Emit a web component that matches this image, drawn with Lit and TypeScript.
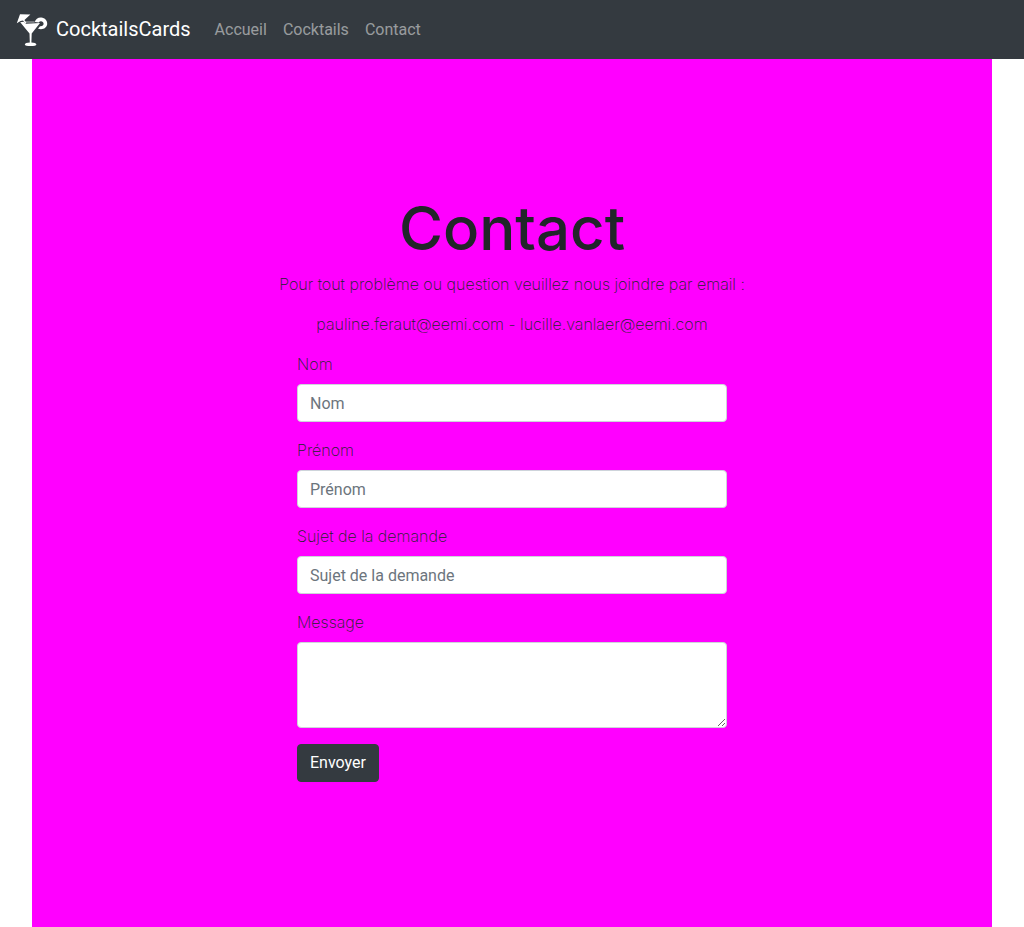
import { LitElement, html, css } from "lit";
import { customElement } from "lit/decorators.js";

@customElement("app-navbar")
export class AppNavbar extends LitElement {
  static styles = css`
    :host {
      display: block;
    }
    .bar {
      display: flex;
      align-items: center;
      gap: 16px;
      box-sizing: border-box;
      min-height: 59px;
      padding: 8px 16px;
      background: #343a40;
    }
    .brand {
      display: flex;
      align-items: center;
      gap: 8px;
      color: #fff;
      font-size: 20px;
      line-height: 30px;
      text-decoration: none;
    }
    .name {
      padding-bottom: 2px;
    }
    .logo {
      display: block;
      width: 32px;
      height: 34px;
    }
    .links {
      display: flex;
      margin: 0;
      padding: 0;
      list-style: none;
    }
    .link {
      display: block;
      padding: 8px;
      color: rgba(255, 255, 255, 0.5);
      font-size: 16px;
      line-height: 24px;
      text-decoration: none;
    }
  `;

  render() {
    return html`
      <nav class="bar">
        <a class="brand" href="#">
          <svg class="logo" viewBox="0 0 32 34" fill="#fff" aria-hidden="true">
            <path d="M4 1.3 14.4 1.5 8.2 7.2 4.6 8 .8 10.2Z" />
            <path d="M6 6 7.2 5.4 10.4 9.8 9.2 10.4Z" />
            <path d="M4.2 9.3 7.6 8.8 10 10.8 15 10.5 24 10 15.7 20.6 15.4 29.6C18.2 29.8 20.4 30.4 20.4 31.4S18 33 14.6 33 8.8 32.4 8.8 31.4 11 29.8 13.8 29.6L13.5 20.6Z" />
            <path d="M9 8.6H18.6V9.6H9.4Z" opacity=".65" />
            <path d="M18.8 9C19.5 6.4 22 4.4 25.2 4.6 29 4.9 31.6 7.9 31.2 11.2 30.6 14.9 27 17.2 22 15.7L24 13.2C26.2 13.5 27.6 12.3 27.6 10.7 27.6 9.4 26.4 8.3 25 8.3 24 8.3 23.3 8.7 22.8 9.4Z" />
          </svg>
          <span class="name">CocktailsCards</span>
        </a>
        <ul class="links">
          <li><a class="link" href="#accueil">Accueil</a></li>
          <li><a class="link" href="#cocktails">Cocktails</a></li>
          <li><a class="link" href="#contact">Contact</a></li>
        </ul>
      </nav>
    `;
  }
}

@customElement("contact-form")
export class ContactForm extends LitElement {
  static styles = css`
    :host {
      display: block;
      width: 100%;
      max-width: 430px;
    }
    .form {
      display: flex;
      flex-direction: column;
      align-items: flex-start;
      gap: 16px;
      margin-bottom: 16px;
    }
    .group {
      display: flex;
      flex-direction: column;
      gap: 8px;
      width: 100%;
    }
    .label {
      font-family: Inter, Roboto, sans-serif;
      font-weight: 200;
    }
    .control {
      box-sizing: border-box;
      width: 100%;
      height: 38px;
      margin: 0;
      padding: 6px 12px;
      border: 1px solid #ced4da;
      border-radius: 4px;
      background: #fff;
      color: #495057;
      font: inherit;
    }
    .control::placeholder {
      color: #6c757d;
      opacity: 1;
    }
    .area {
      display: block;
      height: 86px;
      resize: vertical;
    }
    .submit {
      padding: 6px 12px;
      border: 1px solid #343a40;
      border-radius: 4px;
      background: #343a40;
      color: #fff;
      font: inherit;
      cursor: pointer;
    }
  `;

  private fields = [
    { id: "nom", label: "Nom" },
    { id: "prenom", label: "Prénom" },
    { id: "sujet", label: "Sujet de la demande" },
  ];

  render() {
    return html`
      <form class="form">
        ${this.fields.map(
          (f) => html`
            <div class="group">
              <label class="label" for=${f.id}>${f.label}</label>
              <input class="control" type="text" id=${f.id} name=${f.id} placeholder=${f.label} />
            </div>
          `
        )}
        <div class="group">
          <label class="label" for="message">Message</label>
          <textarea class="control area" id="message" name="message"></textarea>
        </div>
        <button class="submit" type="submit">Envoyer</button>
      </form>
    `;
  }
}

@customElement("app-root")
export class AppRoot extends LitElement {
  static styles = css`
    :host {
      display: flex;
      flex-direction: column;
      min-height: 100vh;
      background: #fff;
      color: #212529;
      font-family: Roboto, "Liberation Sans", sans-serif;
      font-size: 16px;
      line-height: 24px;
    }
    .panel {
      flex: 1;
      display: flex;
      flex-direction: column;
      align-items: center;
      justify-content: center;
      margin: 0 32px;
      background: #f0f;
    }
    .title {
      margin: 0 0 4px;
      font-family: Inter, Roboto, sans-serif;
      font-size: 60px;
      font-weight: 500;
      line-height: 80px;
    }
    .text {
      margin: 0 0 16px;
      font-family: Inter, Roboto, sans-serif;
      font-weight: 200;
      text-align: center;
    }
  `;

  render() {
    return html`
      <app-navbar></app-navbar>
      <main class="panel">
        <h1 class="title">Contact</h1>
        <p class="text">Pour tout problème ou question veuillez nous joindre par email :</p>
        <p class="text">pauline.feraut@eemi.com - lucille.vanlaer@eemi.com</p>
        <contact-form></contact-form>
      </main>
    `;
  }
}
